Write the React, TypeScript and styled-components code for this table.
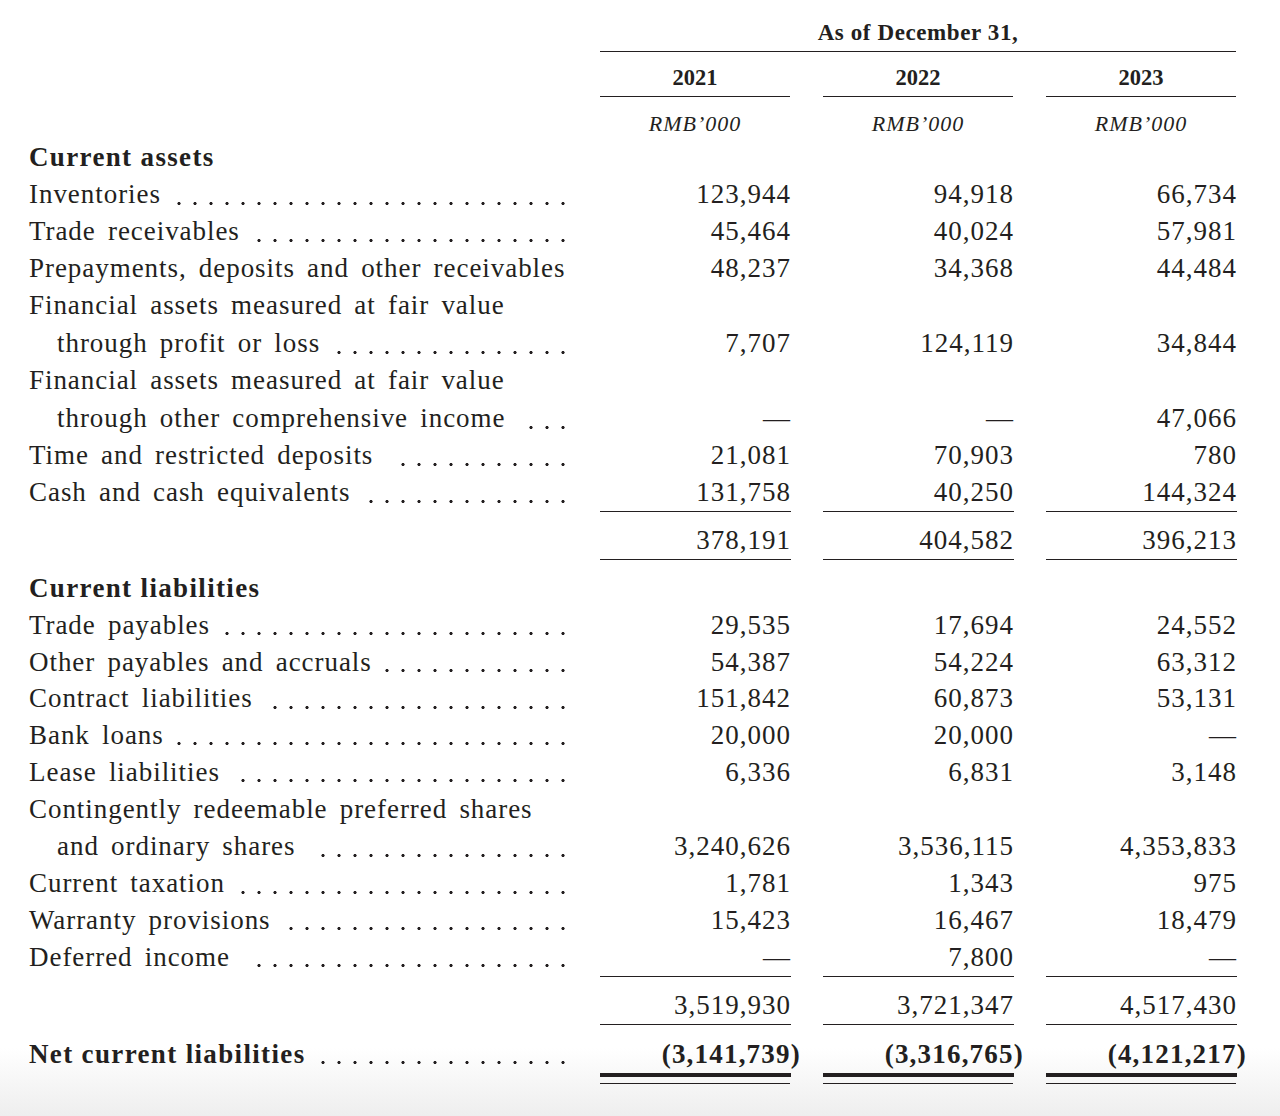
import React from "react";
import styled, { createGlobalStyle } from "styled-components";

const GlobalStyle = createGlobalStyle`
  html, body {
    margin: 0;
    padding: 0;
  }
  body {
    background: linear-gradient(to bottom, #ffffff 0px, #ffffff 1048px, #eeeeee 1116px);
    min-height: 1116px;
    color: #231f20;
    font-family: "Liberation Serif", "Times New Roman", serif;
  }
`;

const INK = "#231f20";

const Page = styled.div`
  width: 1280px;
  min-height: 1116px;
  box-sizing: border-box;
  padding: 18px 0 0 29px;
`;

const Row = styled.div<{ $gapTop?: number }>`
  display: flex;
  align-items: flex-start;
  margin-top: ${(p) => p.$gapTop ?? 0}px;
`;

const LabelCell = styled.div<{ $padTop?: number }>`
  width: 571px;
  box-sizing: border-box;
  padding-right: 29px;
  padding-top: ${(p) => p.$padTop ?? 0}px;
  flex: none;
`;

const LabelLine = styled.div<{ $indent?: boolean; $bold?: boolean; $lh: number }>`
  display: flex;
  align-items: stretch;
  height: ${(p) => p.$lh}px;
  line-height: ${(p) => p.$lh}px;
  padding-left: ${(p) => (p.$indent ? 28 : 0)}px;
  font-size: 27px;
  font-weight: ${(p) => (p.$bold ? 700 : 400)};
  letter-spacing: ${(p) => (p.$bold ? "1.35px" : "0.95px")};
  word-spacing: ${(p) => (p.$bold ? "0px" : "4.5px")};
  white-space: nowrap;
`;

const Leader = styled.span`
  flex: 1;
  min-width: 0;
  margin-left: 6px;
  display: flex;
  flex-wrap: wrap;
  direction: rtl;
  overflow: hidden;
  height: 100%;
`;

const Dot = styled.span`
  flex: none;
  width: 16px;
  height: 100%;
  background-image: radial-gradient(circle at center, ${INK} 1.3px, transparent 1.9px);
  background-size: 16px 5px;
  background-repeat: no-repeat;
  background-position: center bottom 7.5px;
`;

const Dots: React.FC = () => (
  <Leader>
    {Array.from({ length: 36 }, (_, i) => (
      <Dot key={i} />
    ))}
  </Leader>
);

const ValueGrid = styled.div`
  display: grid;
  grid-template-columns: repeat(3, 190px);
  column-gap: 33px;
`;

const HeaderTitle = styled.div`
  grid-column: 1 / span 3;
  text-align: center;
  font-size: 23px;
  font-weight: 700;
  letter-spacing: 0.6px;
  line-height: 30px;
  padding-bottom: 3px;
  border-bottom: 1px solid ${INK};
`;

const YearCell = styled.div`
  margin-top: 11px;
  text-align: center;
  font-size: 22.5px;
  font-weight: 700;
  line-height: 30px;
  padding-bottom: 3px;
  border-bottom: 1px solid ${INK};
`;

const UnitCell = styled.div`
  margin-top: 12px;
  text-align: center;
  font-size: 22px;
  font-style: italic;
  letter-spacing: 1px;
  line-height: 30px;
  height: 30px;
`;

const Spacer = styled.div`
  width: 571px;
  flex: none;
`;

type Kind = "plain" | "sum" | "net";

const ValueCell = styled.div<{ $kind: Kind; $padTop: number; $lh: number }>`
  text-align: right;
  font-size: 27px;
  white-space: nowrap;
  line-height: ${(p) => p.$lh}px;
  letter-spacing: ${(p) => (p.$kind === "net" ? "1.2px" : "1px")};
  font-weight: ${(p) => (p.$kind === "net" ? 700 : 400)};
  margin-right: ${(p) => (p.$kind === "net" ? "-1.2px" : "-1px")};
  padding-top: ${(p) => p.$padTop}px;
  border-top: ${(p) => (p.$kind === "sum" ? `1px solid ${INK}` : "none")};
  border-bottom: ${(p) =>
    p.$kind === "sum" ? `1px solid ${INK}` : p.$kind === "net" ? `4px solid ${INK}` : "none"};
`;

const SecondRule = styled.div`
  margin-top: 6px;
  border-top: 1px solid ${INK};
`;

const Paren = styled.span`
  margin-right: -0.36em;
`;

type Item = {
  label: string | [string, string];
  values: [string, string, string];
  leader?: boolean;
};

const assets: Item[] = [
  { label: "Inventories", values: ["123,944", "94,918", "66,734"] },
  { label: "Trade receivables", values: ["45,464", "40,024", "57,981"] },
  {
    label: "Prepayments, deposits and other receivables",
    values: ["48,237", "34,368", "44,484"],
    leader: false,
  },
  {
    label: ["Financial assets measured at fair value", "through profit or loss"],
    values: ["7,707", "124,119", "34,844"],
  },
  {
    label: ["Financial assets measured at fair value", "through other comprehensive income"],
    values: ["—", "—", "47,066"],
  },
  { label: "Time and restricted deposits", values: ["21,081", "70,903", "780"] },
  { label: "Cash and cash equivalents", values: ["131,758", "40,250", "144,324"] },
];

const liabilities: Item[] = [
  { label: "Trade payables", values: ["29,535", "17,694", "24,552"] },
  { label: "Other payables and accruals", values: ["54,387", "54,224", "63,312"] },
  { label: "Contract liabilities", values: ["151,842", "60,873", "53,131"] },
  { label: "Bank loans", values: ["20,000", "20,000", "—"] },
  { label: "Lease liabilities", values: ["6,336", "6,831", "3,148"] },
  {
    label: ["Contingently redeemable preferred shares", "and ordinary shares"],
    values: ["3,240,626", "3,536,115", "4,353,833"],
  },
  { label: "Current taxation", values: ["1,781", "1,343", "975"] },
  { label: "Warranty provisions", values: ["15,423", "16,467", "18,479"] },
  { label: "Deferred income", values: ["—", "7,800", "—"] },
];

const ItemRow: React.FC<{ item: Item; pitch: number }> = ({ item, pitch }) => {
  const lines = Array.isArray(item.label) ? item.label : [item.label];
  const two = lines.length > 1;
  const lh = two ? pitch + 0.5 : pitch;
  const withLeader = item.leader !== false;
  return (
    <Row>
      <LabelCell>
        {lines.map((l, i) => {
          const last = i === lines.length - 1;
          return (
            <LabelLine key={i} $indent={i > 0} $lh={lh}>
              <span>{l}</span>
              {last && withLeader ? <Dots /> : null}
            </LabelLine>
          );
        })}
      </LabelCell>
      <ValueGrid>
        {item.values.map((v, i) => (
          <ValueCell key={i} $kind="plain" $lh={lh} $padTop={(lines.length - 1) * lh}>
            {v}
          </ValueCell>
        ))}
      </ValueGrid>
    </Row>
  );
};

const SectionHead: React.FC<{ text: string; gapTop?: number; pitch: number }> = ({
  text,
  gapTop,
  pitch,
}) => (
  <Row $gapTop={gapTop}>
    <LabelCell>
      <LabelLine $bold $lh={pitch}>
        <span>{text}</span>
      </LabelLine>
    </LabelCell>
  </Row>
);

const SumRow: React.FC<{ values: string[] }> = ({ values }) => (
  <Row>
    <Spacer />
    <ValueGrid>
      {values.map((v, i) => (
        <ValueCell key={i} $kind="sum" $lh={37} $padTop={10}>
          {v}
        </ValueCell>
      ))}
    </ValueGrid>
  </Row>
);

const NetRow: React.FC<{ label: string; values: string[] }> = ({ label, values }) => (
  <Row>
    <LabelCell $padTop={11}>
      <LabelLine $bold $lh={37}>
        <span>{label}</span>
        <Dots />
      </LabelLine>
    </LabelCell>
    <ValueGrid>
      {values.map((v, i) => (
        <div key={i}>
          <ValueCell $kind="net" $lh={37} $padTop={11}>
            ({v}
            <Paren>)</Paren>
          </ValueCell>
          <SecondRule />
        </div>
      ))}
    </ValueGrid>
  </Row>
);

export default function App() {
  return (
    <>
      <GlobalStyle />
      <Page>
        <Row>
          <Spacer />
          <ValueGrid>
            <HeaderTitle>As of December 31,</HeaderTitle>
            {["2021", "2022", "2023"].map((y) => (
              <YearCell key={y}>{y}</YearCell>
            ))}
            {[0, 1, 2].map((i) => (
              <UnitCell key={i}>RMB’000</UnitCell>
            ))}
          </ValueGrid>
        </Row>

        <SectionHead text="Current assets" pitch={37} />
        {assets.map((it, i) => (
          <ItemRow key={i} item={it} pitch={37} />
        ))}
        <SumRow values={["378,191", "404,582", "396,213"]} />

        <SectionHead text="Current liabilities" gapTop={10} pitch={36.8} />
        {liabilities.map((it, i) => (
          <ItemRow key={i} item={it} pitch={36.8} />
        ))}
        <SumRow values={["3,519,930", "3,721,347", "4,517,430"]} />
        <NetRow label="Net current liabilities" values={["3,141,739", "3,316,765", "4,121,217"]} />
      </Page>
    </>
  );
}
